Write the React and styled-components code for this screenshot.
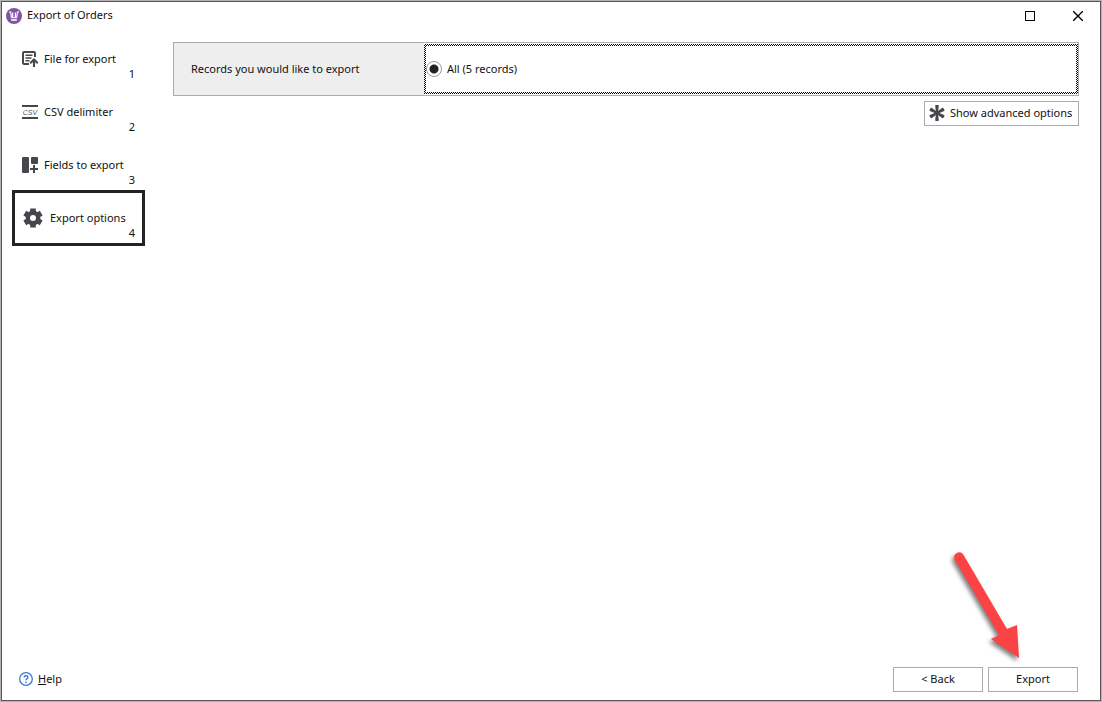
import React, {useState} from 'react';
import styled, {createGlobalStyle} from 'styled-components';

const colors = {
  text: '#111111',
  icon: '#46464c',
  frame: '#57575b',
  border: '#ababab',
  labelBackground: '#eeeeee',
  selected: '#232226',
  help: '#3b78cf',
  arrow: '#fb4245',
};

const GlobalStyle = createGlobalStyle`
  *, *::before, *::after {
    box-sizing: border-box;
  }

  body {
    margin: 0;
    background-color: #ffffff;
    color: ${colors.text};
    font-family: 'Noto Sans', 'Open Sans', sans-serif;
    font-size: 11px;
    line-height: 16px;
  }

  button, input {
    font: inherit;
    color: inherit;
  }
`;

const Window = styled.div`
  min-height: 100vh;
  display: flex;
  flex-direction: column;
  border: 1px solid #b3b3b3;
  box-shadow: inset 0 0 0 1px ${colors.frame};
  padding: 1px;
`;

const TitleBar = styled.header`
  display: flex;
  align-items: center;
  height: 29px;
  padding: 0 8px 2px 4px;
`;

const Title = styled.h1`
  flex-grow: 1;
  margin: 0 0 0 5px;
  padding-bottom: 1px;
  font-size: 11px;
  font-weight: normal;
`;

const WindowButton = styled.button`
  display: flex;
  align-items: center;
  justify-content: center;
  width: 28px;
  height: 26px;
  margin-left: 20px;
  padding: 0;
  border: none;
  background: none;
`;

const Body = styled.div`
  flex-grow: 1;
  display: flex;
`;

const Steps = styled.nav`
  display: flex;
  flex-direction: column;
  flex-shrink: 0;
  width: 133px;
  margin-left: 10px;
`;

const Step = styled.button`
  display: flex;
  flex-direction: column;
  justify-content: flex-end;
  height: 56px;
  margin-bottom: -3px;
  padding: 0 7px 3px ${({$active}) => ($active ? 8 : 7)}px;
  border: 3px solid ${({$active}) => ($active ? colors.selected : 'transparent')};
  background: none;
  text-align: left;
`;

const StepLabel = styled.span`
  display: flex;
  align-items: center;
  gap: ${({$active}) => ($active ? 7 : 6)}px;
  height: 16px;
  white-space: nowrap;

  & > svg {
    flex-shrink: 0;
  }
`;

const StepNumber = styled.span`
  align-self: flex-end;
  height: 14px;
  line-height: 14px;
`;

const Content = styled.main`
  flex-grow: 1;
  display: flex;
  flex-direction: column;
  align-items: flex-end;
  gap: 5px;
  padding: 11px 21px 0 28px;
`;

const Option = styled.div`
  display: flex;
  align-self: stretch;
  height: 54px;
  border: 1px solid ${colors.border};
`;

const OptionLabel = styled.div`
  display: flex;
  align-items: center;
  width: 250px;
  padding-left: 17px;
  background-color: ${colors.labelBackground};
`;

const FocusFrame = styled.div`
  flex-grow: 1;
  display: flex;
  margin: 1px 0;
  padding: 2px;
  background: repeating-conic-gradient(#000000 0 25%, #ffffff 0 50%) 0 0 / 2px 2px;
`;

const RadioLabel = styled.label`
  flex-grow: 1;
  display: flex;
  align-items: center;
  gap: 5px;
  background-color: #ffffff;
`;

const Radio = styled.input`
  appearance: none;
  width: 16px;
  height: 16px;
  margin: 0;
  border: 1px solid #9a9a9a;
  border-radius: 50%;
  outline: none;
  background-color: #ffffff;

  &:checked {
    background-image: radial-gradient(circle, #222222 4px, transparent 5px);
  }
`;

const Button = styled.button`
  display: flex;
  align-items: center;
  justify-content: ${({$wide}) => ($wide ? 'flex-start' : 'center')};
  gap: 5px;
  min-width: ${({$wide}) => ($wide ? 155 : 90)}px;
  height: 25px;
  padding: 0 4px 1px;
  border: 1px solid ${colors.border};
  background-color: #ffffff;
  white-space: nowrap;
`;

const Footer = styled.footer`
  display: flex;
  align-items: center;
  gap: 5px;
  padding: 0 22px 8px 17px;
`;

const HelpLink = styled.a`
  display: flex;
  align-items: center;
  gap: 5px;
  margin-right: auto;
  padding-bottom: 1px;
  color: inherit;
  text-decoration: none;
`;

const ExportAnchor = styled.div`
  position: relative;
`;

const Arrow = styled.svg`
  position: absolute;
  right: 48px;
  bottom: 25px;
  pointer-events: none;
  filter: drop-shadow(-2px 3px 2px rgba(0, 0, 0, 0.5));
`;

const LogoIcon = () => (
  <svg width="16" height="16" viewBox="0 0 16 16" fill="none" aria-hidden="true">
    <circle cx="8" cy="8" r="8" fill="#7e55a3" />
    <path d="M3 4h1.6l.9 5.6h5L11.6 4H13" stroke="#e9dff2" strokeWidth="1.4" />
    <path d="M6.6 4.5v4.8M9.4 4.5v4.8" stroke="#ffffff" strokeWidth="1.2" />
    <path d="M5.2 12h5.6" stroke="#ffffff" strokeWidth="1.6" />
  </svg>
);

const FileIcon = () => (
  <svg width="16" height="16" viewBox="0 0 16 16" fill="none" stroke={colors.icon} aria-hidden="true">
    <path d="M13 6V2.2Q13 1 11.8 1H2.2Q1 1 1 2.2v9.6Q1 13 2.2 13H7" strokeWidth="2" />
    <path d="M3.5 4.2h7M3.5 7h6M3.5 9.8h4" strokeWidth="1.6" />
    <path d="M12 16V9M8.2 12.2L12 8.4l3.8 3.8" strokeWidth="2.1" />
  </svg>
);

const CsvIcon = () => (
  <svg width="16" height="16" viewBox="0 0 16 16" aria-hidden="true">
    <path d="M0 2h16M0 14h16" stroke={colors.icon} strokeWidth="2" />
    <text x="8" y="11" textAnchor="middle" fontSize="7" fontStyle="italic" fontFamily="'Liberation Sans', sans-serif" fill="#55555a">CSV</text>
  </svg>
);

const FieldsIcon = () => (
  <svg width="16" height="16" viewBox="0 0 16 16" fill={colors.icon} aria-hidden="true">
    <rect width="7" height="16" rx="1" />
    <rect x="9" width="7" height="7" rx="1" />
    <path d="M11 8h2v3h3v2h-3v3h-2v-3H8v-2h3z" />
  </svg>
);

const GearIcon = () => (
  <svg width="20" height="20" viewBox="0 0 20 20" stroke={colors.icon} aria-hidden="true">
    <path d="M10 0.5v19M1.8 5.2l16.4 9.6M1.8 14.8l16.4-9.6" strokeWidth="5.6" />
    <circle cx="10" cy="10" r="5.2" fill="#ffffff" strokeWidth="4.4" />
  </svg>
);

const AsteriskIcon = () => (
  <svg width="16" height="16" viewBox="0 0 16 16" fill={colors.icon} aria-hidden="true">
    {[0, 60, 120, 180, 240, 300].map((angle) => (
      <path key={angle} d="M7.1 8.5L6.2.8Q6.2 0 7 0h2q.8 0 .8.8l-.9 7.7z" transform={`rotate(${angle} 8 8)`} />
    ))}
  </svg>
);

const HelpIcon = () => (
  <svg width="14" height="14" viewBox="0 0 14 14" fill="none" stroke={colors.help} aria-hidden="true">
    <circle cx="7" cy="7" r="6.3" strokeWidth="1.3" />
    <path d="M5.1 5.4Q5.2 3.8 7 3.8t1.9 1.5Q8.9 6.2 7.8 6.8 7 7.2 7 8.2M7 9.4v1.5" strokeWidth="1.4" />
  </svg>
);

const steps = [
  {label: 'File for export', icon: <FileIcon />},
  {label: 'CSV delimiter', icon: <CsvIcon />},
  {label: 'Fields to export', icon: <FieldsIcon />},
  {label: 'Export options', icon: <GearIcon />},
];

const App = () => {
  const [current, setCurrent] = useState(3);

  return (
    <Window>
      <GlobalStyle />
      <TitleBar>
        <LogoIcon />
        <Title>Export of Orders</Title>
        <WindowButton aria-label="Maximize">
          <svg width="10" height="10" viewBox="0 0 10 10" fill="none" stroke="#000000">
            <rect x="0.5" y="0.5" width="9" height="9" />
          </svg>
        </WindowButton>
        <WindowButton aria-label="Close">
          <svg width="10" height="10" viewBox="0 0 10 10" stroke="#000000" strokeWidth="1.4">
            <path d="M0 0l10 10M10 0L0 10" />
          </svg>
        </WindowButton>
      </TitleBar>
      <Body>
        <Steps>
          {steps.map((step, index) => (
            <Step key={step.label} $active={index === current} onClick={() => setCurrent(index)}>
              <StepLabel $active={index === current}>
                {step.icon}
                {step.label}
              </StepLabel>
              <StepNumber>{index + 1}</StepNumber>
            </Step>
          ))}
        </Steps>
        <Content>
          <Option role="radiogroup" aria-labelledby="records-label">
            <OptionLabel id="records-label">Records you would like to export</OptionLabel>
            <FocusFrame>
              <RadioLabel>
                <Radio type="radio" name="records" defaultChecked />
                All (5 records)
              </RadioLabel>
            </FocusFrame>
          </Option>
          <Button $wide>
            <AsteriskIcon />
            Show advanced options
          </Button>
        </Content>
      </Body>
      <Footer>
        <HelpLink href="#help">
          <HelpIcon />
          <span><u>H</u>elp</span>
        </HelpLink>
        <Button>&lt; Back</Button>
        <ExportAnchor>
          <Button>Export</Button>
          <Arrow width="88" height="120" viewBox="0 0 88 120" fill={colors.arrow} aria-hidden="true">
            <path d="M12.6 12.4a5 5 0 0 1 8.7-4.8L65 82l10-4 2 33-28-19 8-4z" />
          </Arrow>
        </ExportAnchor>
      </Footer>
    </Window>
  );
};

export default App;
